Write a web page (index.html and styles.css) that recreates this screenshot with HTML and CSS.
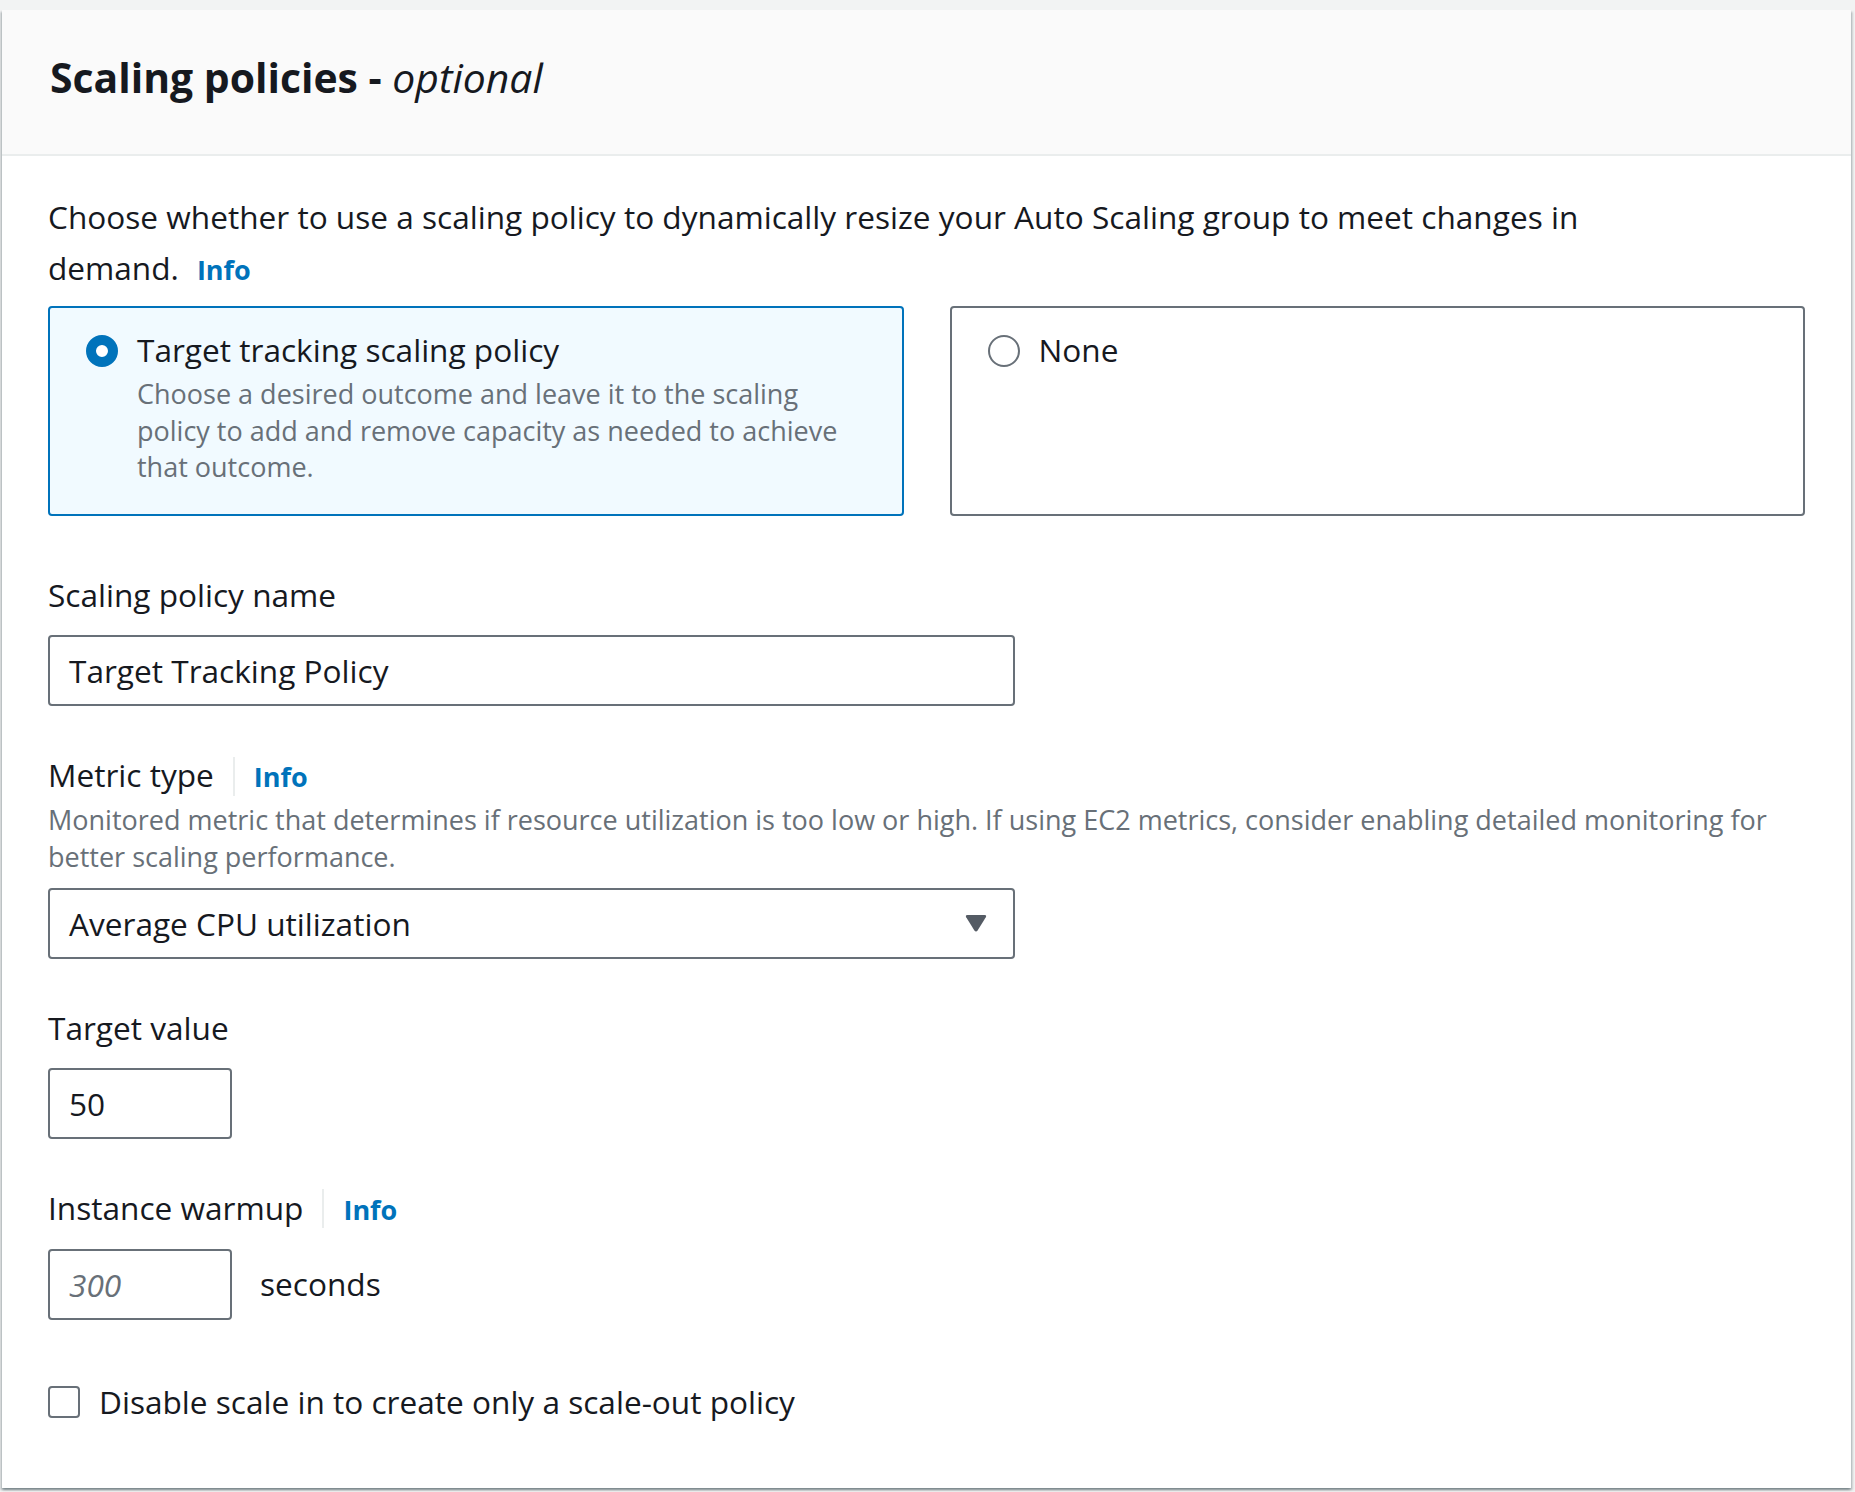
FILE: index.html
```html
<!DOCTYPE html>
<html lang="en">
<head>
<meta charset="utf-8">
<title>Scaling policies</title>
<link rel="stylesheet" href="styles.css">
</head>
<body>
<section class="card">
  <header class="card-header">
    <h2 class="title">Scaling policies - <i class="optional">optional</i></h2>
  </header>
  <div class="card-body">
    <p class="intro">Choose whether to use a scaling policy to dynamically resize your Auto Scaling group to meet changes in demand.<a class="info info-inline" href="#">Info</a></p>

    <div class="tiles">
      <div class="tile tile-selected">
        <span class="radio radio-checked"></span>
        <div class="tile-text">
          <div class="tile-label">Target tracking scaling policy</div>
          <div class="tile-desc">Choose a desired outcome and leave it to the scaling policy to add and remove capacity as needed to achieve that outcome.</div>
        </div>
      </div>
      <div class="tile">
        <span class="radio"></span>
        <div class="tile-text">
          <div class="tile-label">None</div>
        </div>
      </div>
    </div>

    <div class="field field-first">
      <div class="label-row"><span class="label">Scaling policy name</span></div>
      <div class="input input-wide">Target Tracking Policy</div>
    </div>

    <div class="field">
      <div class="label-row"><span class="label">Metric type</span><span class="sep"></span><a class="info" href="#">Info</a></div>
      <div class="field-desc">Monitored metric that determines if resource utilization is too low or high. If using EC2 metrics, consider enabling detailed monitoring for better scaling performance.</div>
      <div class="input input-wide select">
        <span>Average CPU utilization</span>
        <svg class="caret" width="22" height="18" viewBox="0 0 22 18"><path d="M2.5 1 H19.5 Q22 1 20.8 3.2 L12.6 16.4 Q11 18.6 9.4 16.4 L1.2 3.2 Q0 1 2.5 1 Z" fill="#545b64"/></svg>
      </div>
    </div>

    <div class="field">
      <div class="label-row"><span class="label">Target value</span></div>
      <div class="input input-small">50</div>
    </div>

    <div class="field">
      <div class="label-row"><span class="label">Instance warmup</span><span class="sep"></span><a class="info" href="#">Info</a></div>
      <div class="inline-row">
        <div class="input input-small placeholder">300</div>
        <span class="suffix">seconds</span>
      </div>
    </div>

    <div class="check-row">
      <span class="checkbox"></span>
      <span class="check-label">Disable scale in to create only a scale-out policy</span>
    </div>
  </div>
</section>
</body>
</html>
```
FILE: styles.css
```css
html, body {
  margin: 0;
  background: #f2f3f3;
}
body {
  padding: 10px 4px 5px 2px;
  font-family: "Open Sans", "Noto Sans", sans-serif;
  font-size: 31.6px;
  line-height: 50.6px;
  color: #16191f;
}
.card {
  background: #ffffff;
  box-shadow: 0 2px 2px 0 rgba(0, 28, 36, 0.3), 2px 2px 2px 0 rgba(0, 28, 36, 0.15), -2px 2px 2px 0 rgba(0, 28, 36, 0.15);
}
.card-header {
  background: #fafafa;
  border-bottom: 2px solid #eaeded;
  padding: 42px 46px 51px 48px;
}
.title {
  margin: 0;
  font-size: 40.9px;
  line-height: 51px;
  font-weight: 700;
  color: #16191f;
}
.optional {
  font-weight: 400;
  font-style: italic;
}
.card-body {
  padding: 36px 46px 60px 46px;
}
.intro {
  margin: 0;
  max-width: 1600px;
}
.info {
  color: #0073bb;
  font-weight: 700;
  font-size: 27px;
  text-decoration: none;
}
.info-inline {
  margin-left: 18px;
}
.tiles {
  margin-top: 11px;
  display: grid;
  grid-template-columns: 1fr 1fr;
  gap: 46px;
}
.tile {
  display: flex;
  align-items: flex-start;
  gap: 19px;
  border: 2px solid #687078;
  border-radius: 4px;
  padding: 17px 36px 29px 36px;
  height: 210px;
  box-sizing: border-box;
  background: #ffffff;
}
.tile-selected {
  border-color: #0073bb;
  background: #f1faff;
}
.radio {
  flex: none;
  width: 32px;
  height: 32px;
  box-sizing: border-box;
  border-radius: 50%;
  border: 2px solid #687078;
  background: #ffffff;
  margin-top: 10px;
}
.radio-checked {
  border: 10px solid #0073bb;
}
.tile-label {
  line-height: 50.6px;
}
.tile-desc {
  font-size: 27px;
  line-height: 36.8px;
  color: #687078;
}
.field {
  margin-top: 44px;
}
.field-first {
  margin-top: 54px;
}
.label-row {
  display: flex;
  align-items: baseline;
  margin-bottom: 14px;
}
.sep {
  align-self: center;
  width: 2px;
  height: 39px;
  background: #eaeded;
  margin: 0 19px 0 19px;
}
.field-desc {
  margin-top: -14px;
  margin-bottom: 12px;
  font-size: 27px;
  line-height: 36.8px;
  color: #687078;
}
.input {
  box-sizing: border-box;
  height: 71px;
  border: 2px solid #687078;
  border-radius: 4px;
  padding: 8px 19px;
  background: #ffffff;
  line-height: 51px;
  white-space: nowrap;
}
.input-wide {
  width: 967px;
}
.input-small {
  width: 184px;
}
.select {
  display: flex;
  align-items: center;
  justify-content: space-between;
  padding-right: 26px;
}
.caret {
  display: block;
}
.placeholder {
  color: #687078;
  font-style: italic;
}
.inline-row {
  display: flex;
  align-items: center;
  gap: 28px;
}
.check-row {
  margin-top: 57px;
  display: flex;
  align-items: center;
  gap: 19px;
}
.checkbox {
  flex: none;
  width: 32px;
  height: 32px;
  box-sizing: border-box;
  border: 2px solid #687078;
  border-radius: 4px;
  background: #ffffff;
}
```
